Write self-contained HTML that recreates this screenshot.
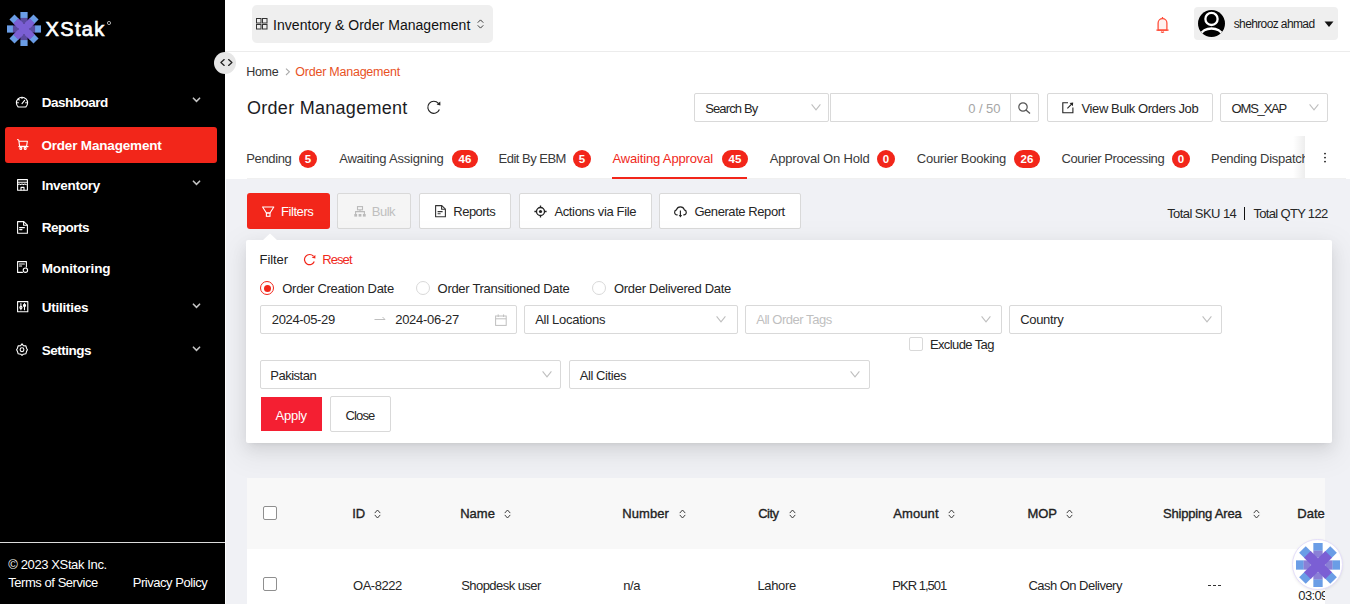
<!DOCTYPE html>
<html><head><meta charset="utf-8"><style>
html,body{margin:0;padding:0;}
body{width:1350px;height:604px;overflow:hidden;position:relative;background:#fff;font-family:'Liberation Sans', sans-serif;}
.t{position:absolute;white-space:nowrap;line-height:1;}
svg{overflow:visible}
</style></head><body>
<div style="position:absolute;left:226px;top:179px;width:1124px;height:425px;background:#f0f1f5;"></div>
<div style="position:absolute;left:0px;top:0px;width:225px;height:604px;background:#000;"></div>
<div style="position:absolute;left:225px;top:51px;width:1125px;height:1px;background:#ececec;"></div>
<svg style="position:absolute;left:7px;top:12px;" width="34" height="34" viewBox="-17 -17 34 34"><rect x="-3.6" y="-17" width="7.2" height="6" fill="#6a9de6" transform="rotate(0)"/><rect x="-3.6" y="-17" width="7.2" height="6" fill="#6a9de6" transform="rotate(45)"/><rect x="-3.6" y="-17" width="7.2" height="6" fill="#6a9de6" transform="rotate(90)"/><rect x="-3.6" y="-17" width="7.2" height="6" fill="#6a9de6" transform="rotate(135)"/><rect x="-3.6" y="-17" width="7.2" height="6" fill="#6a9de6" transform="rotate(180)"/><rect x="-3.6" y="-17" width="7.2" height="6" fill="#6a9de6" transform="rotate(225)"/><rect x="-3.6" y="-17" width="7.2" height="6" fill="#6a9de6" transform="rotate(270)"/><rect x="-3.6" y="-17" width="7.2" height="6" fill="#6a9de6" transform="rotate(315)"/><rect x="-3.6" y="-11.1" width="7.2" height="5.5" fill="#5a4a9f" transform="rotate(0)"/><rect x="-3.6" y="-11.1" width="7.2" height="5.5" fill="#5a4a9f" transform="rotate(90)"/><rect x="-3.6" y="-11.1" width="7.2" height="5.5" fill="#5a4a9f" transform="rotate(180)"/><rect x="-3.6" y="-11.1" width="7.2" height="5.5" fill="#5a4a9f" transform="rotate(270)"/><rect x="-3.7" y="-11.6" width="7.4" height="23.2" fill="#7b5fd4" transform="rotate(45)"/><rect x="-3.7" y="-11.6" width="7.4" height="23.2" fill="#7b5fd4" transform="rotate(-45)"/></svg>
<span class="t" style="left:45.60px;top:18.70px;font-size:20px;color:#ffffff;letter-spacing:1.335px;-webkit-text-stroke:0.7px #fff;">XStak</span>
<svg style="position:absolute;left:106px;top:20px;" width="6" height="6" viewBox="0 0 6 6"><circle cx="3" cy="3" r="1.6" fill="none" stroke="#bbb" stroke-width="0.9"/></svg>
<div style="position:absolute;left:5px;top:127px;width:212px;height:35.5px;background:#f2261a;border-radius:3px;"></div>
<span class="t" style="left:41.70px;top:95.53px;font-size:13.5px;color:#ffffff;font-weight:bold;letter-spacing:-0.496px;">Dashboard</span>
<span class="t" style="left:41.40px;top:139.12px;font-size:13.5px;color:#ffffff;font-weight:bold;letter-spacing:-0.176px;">Order Management</span>
<span class="t" style="left:41.70px;top:178.53px;font-size:13.5px;color:#ffffff;font-weight:bold;letter-spacing:-0.282px;">Inventory</span>
<span class="t" style="left:41.70px;top:221.03px;font-size:13.5px;color:#ffffff;font-weight:bold;letter-spacing:-0.533px;">Reports</span>
<span class="t" style="left:41.70px;top:261.52px;font-size:13.5px;color:#ffffff;font-weight:bold;letter-spacing:-0.098px;">Monitoring</span>
<span class="t" style="left:41.70px;top:301.12px;font-size:13.5px;color:#ffffff;font-weight:bold;letter-spacing:-0.256px;">Utilities</span>
<span class="t" style="left:41.70px;top:343.82px;font-size:13.5px;color:#ffffff;font-weight:bold;letter-spacing:-0.492px;">Settings</span>
<svg style="position:absolute;left:16px;top:95.5px;" width="12" height="12" viewBox="0 0 12 12"><path d="M2.2,11 A5.6,5.6 0 1 1 9.8,11 Z" fill="none" stroke="#fff" stroke-width="1.1" stroke-linecap="round" stroke-linejoin="round"/><path d="M6,7.6 L8.6,4.4" fill="none" stroke="#fff" stroke-width="1.1" stroke-linecap="round" stroke-linejoin="round"/><path d="M6,1.2 V2.4 M2.4,3.2 L3.2,4 M1.4,6.8 H2.4 M9.6,6.8 H10.6" fill="none" stroke="#fff" stroke-width="1.1" stroke-linecap="round" stroke-linejoin="round"/></svg>
<svg style="position:absolute;left:17px;top:138.8px;" width="12" height="11" viewBox="0 0 12 11"><path d="M0.6,0.6 L1.8,1.2 L2.6,7.2 H9.6 L10.4,2.2 H2" fill="none" stroke="#fff" stroke-width="1.1" stroke-linecap="round" stroke-linejoin="round"/><circle cx="3.8" cy="9.4" r="1" fill="none" stroke="#fff" stroke-width="1.1" stroke-linecap="round" stroke-linejoin="round"/><circle cx="8.2" cy="9.4" r="1" fill="none" stroke="#fff" stroke-width="1.1" stroke-linecap="round" stroke-linejoin="round"/><path d="M1.8,7.6 H11" fill="none" stroke="#fff" stroke-width="1.1" stroke-linecap="round" stroke-linejoin="round"/></svg>
<svg style="position:absolute;left:17px;top:178.6px;" width="11" height="12" viewBox="0 0 11 12"><rect x="0.6" y="0.6" width="9.8" height="10.6" fill="none" stroke="#fff" stroke-width="1.1" stroke-linecap="round" stroke-linejoin="round"/><path d="M0.6,3.2 H10.4" fill="none" stroke="#fff" stroke-width="1.1" stroke-linecap="round" stroke-linejoin="round"/><path d="M0.8,5.6 Q2.2,4.4 3.6,5.6 Q5,4.4 6.4,5.6 Q7.8,4.4 9.2,5.6" fill="none" stroke="#fff" stroke-width="1.1" stroke-linecap="round" stroke-linejoin="round"/><path d="M4,11 V8.4 H7 V11" fill="none" stroke="#fff" stroke-width="1.1" stroke-linecap="round" stroke-linejoin="round"/></svg>
<svg style="position:absolute;left:17px;top:221px;" width="11" height="13" viewBox="0 0 11 13"><path d="M0.6,0.6 H6.8 L10.4,4.2 V12.2 H0.6 Z" fill="none" stroke="#fff" stroke-width="1.1" stroke-linecap="round" stroke-linejoin="round"/><path d="M6.6,0.8 V4.2 H10.2" fill="none" stroke="#fff" stroke-width="1.1" stroke-linecap="round" stroke-linejoin="round"/><path d="M2.6,6.6 H7.4 M2.6,8.6 H5" fill="none" stroke="#fff" stroke-width="1.1" stroke-linecap="round" stroke-linejoin="round"/></svg>
<svg style="position:absolute;left:17px;top:261px;" width="12" height="12" viewBox="0 0 12 12"><path d="M9.4,6 V0.6 H0.6 V11.4 H5.4" fill="none" stroke="#fff" stroke-width="1.1" stroke-linecap="round" stroke-linejoin="round"/><path d="M2.4,3 H7.4 M2.4,5 H4.6" fill="none" stroke="#fff" stroke-width="1.1" stroke-linecap="round" stroke-linejoin="round"/><circle cx="8.4" cy="9.2" r="2.2" fill="none" stroke="#fff" stroke-width="1.1" stroke-linecap="round" stroke-linejoin="round"/></svg>
<svg style="position:absolute;left:16.8px;top:300.8px;" width="11.5" height="11.5" viewBox="0 0 11.5 11.5"><rect x="0.6" y="0.6" width="10.2" height="10.2" fill="none" stroke="#fff" stroke-width="1.1" stroke-linecap="round" stroke-linejoin="round"/><path d="M3.9,2.6 V8.8 M7.5,2.6 V8.8" fill="none" stroke="#fff" stroke-width="1.1" stroke-linecap="round" stroke-linejoin="round"/><circle cx="3.9" cy="6.4" r="1.1" fill="none" stroke="#fff" stroke-width="1.1" stroke-linecap="round" stroke-linejoin="round"/><circle cx="7.5" cy="4.4" r="1.1" fill="none" stroke="#fff" stroke-width="1.1" stroke-linecap="round" stroke-linejoin="round"/></svg>
<svg style="position:absolute;left:16.2px;top:343px;" width="12" height="13" viewBox="0 0 12 13"><path d="M6,0.8 L7.3,2.6 L9.9,2.9 L10.5,5.2 L11.4,6.8 L10.5,8.6 L9.8,10.8 L7.3,11.2 L6,12.4 L4.7,11.2 L2.2,10.8 L1.5,8.6 L0.6,6.8 L1.5,5.2 L2.1,2.9 L4.7,2.6 Z" fill="none" stroke="#fff" stroke-width="1.1" stroke-linecap="round" stroke-linejoin="round"/><circle cx="6" cy="6.7" r="1.9" fill="none" stroke="#fff" stroke-width="1.1" stroke-linecap="round" stroke-linejoin="round"/></svg>
<svg style="position:absolute;left:192px;top:97.2px;" width="9" height="6" viewBox="0 0 9 6"><path d="M1.4,1.2 L4.5,4.4 L7.6,1.2" fill="none" stroke="#c4c4c4" stroke-width="1.6" stroke-linecap="round" stroke-linejoin="miter"/></svg>
<svg style="position:absolute;left:192px;top:180.2px;" width="9" height="6" viewBox="0 0 9 6"><path d="M1.4,1.2 L4.5,4.4 L7.6,1.2" fill="none" stroke="#c4c4c4" stroke-width="1.6" stroke-linecap="round" stroke-linejoin="miter"/></svg>
<svg style="position:absolute;left:192px;top:303.2px;" width="9" height="6" viewBox="0 0 9 6"><path d="M1.4,1.2 L4.5,4.4 L7.6,1.2" fill="none" stroke="#c4c4c4" stroke-width="1.6" stroke-linecap="round" stroke-linejoin="miter"/></svg>
<svg style="position:absolute;left:192px;top:346.2px;" width="9" height="6" viewBox="0 0 9 6"><path d="M1.4,1.2 L4.5,4.4 L7.6,1.2" fill="none" stroke="#c4c4c4" stroke-width="1.6" stroke-linecap="round" stroke-linejoin="miter"/></svg>
<div style="position:absolute;left:214px;top:51.5px;width:22px;height:22px;background:#e6e6e6;border-radius:50%;"></div>
<svg style="position:absolute;left:219.5px;top:58.5px;" width="13" height="8" viewBox="0 0 13 8"><path d="M4.2,0.6 L0.9,3.5 L4.2,6.4 M8.6,0.6 L11.9,3.5 L8.6,6.4" fill="none" stroke="#222" stroke-width="1.3" stroke-linecap="round" stroke-linejoin="round"/></svg>
<div style="position:absolute;left:0px;top:542px;width:225px;height:1px;background:#dcdcdc;"></div>
<span class="t" style="left:8.30px;top:558.35px;font-size:13px;color:#ffffff;letter-spacing:-0.385px;">© 2023 XStak Inc.</span>
<span class="t" style="left:8.30px;top:576.35px;font-size:13px;color:#ffffff;letter-spacing:-0.458px;">Terms of Service</span>
<span class="t" style="left:132.70px;top:576.35px;font-size:13px;color:#ffffff;letter-spacing:-0.447px;">Privacy Policy</span>
<div style="position:absolute;left:252px;top:5px;width:241px;height:38px;background:#efefef;border-radius:5px;"></div>
<svg style="position:absolute;left:256px;top:18px;" width="12" height="12" viewBox="0 0 12 12"><rect x="0.5" y="0.5" width="4.5" height="4.5" fill="none" stroke="#333" stroke-width="1"/><rect x="6.5" y="0.5" width="4.5" height="4.5" fill="none" stroke="#333" stroke-width="1"/><rect x="0.5" y="6.5" width="4.5" height="4.5" fill="none" stroke="#333" stroke-width="1"/><rect x="6.5" y="6.5" width="4.5" height="4.5" fill="none" stroke="#333" stroke-width="1"/></svg>
<span class="t" style="left:273.00px;top:17.90px;font-size:14px;color:#111111;letter-spacing:0.044px;">Inventory &amp; Order Management</span>
<svg style="position:absolute;left:476.5px;top:18.8px;" width="7" height="10" viewBox="0 0 7 10"><path d="M1,3.4 L3.5,0.9 L6,3.4 M1,6.6 L3.5,9.1 L6,6.6" fill="none" stroke="#333" stroke-width="0.95" stroke-linecap="round" stroke-linejoin="miter"/></svg>
<svg style="position:absolute;left:1155.5px;top:15.5px;" width="13" height="17" viewBox="0 0 13 17"><path d="M2.1,14 V7 A4.4,4.4 0 0 1 10.9,7 V14 Z" fill="#fff1ef" stroke="#ff4a36" stroke-width="1.25"/><path d="M0.4,14 H12.6 M6.5,0.9 V2.6 M5,15.8 Q6.5,16.9 8,15.8" fill="none" stroke="#ff4a36" stroke-width="1.25"/></svg>
<div style="position:absolute;left:1194px;top:7px;width:144px;height:33px;background:#efefef;border-radius:4px;"></div>
<svg style="position:absolute;left:1198px;top:9.6px;" width="27" height="27" viewBox="0 0 27 27"><defs><clipPath id="av"><circle cx="13.5" cy="13.5" r="13.5"/></clipPath></defs><circle cx="13.5" cy="13.5" r="13.5" fill="#000"/><g clip-path="url(#av)"><circle cx="13.5" cy="8.9" r="6.1" fill="none" stroke="#fff" stroke-width="2.3"/><path d="M2.5,25 A11.2,8 0 0 1 24.5,25" fill="none" stroke="#fff" stroke-width="2.3"/></g></svg>
<span class="t" style="left:1233.70px;top:17.90px;font-size:12px;color:#1a1a1a;letter-spacing:-0.617px;">shehrooz ahmad</span>
<svg style="position:absolute;left:1323.5px;top:21.3px;" width="10" height="6.5" viewBox="0 0 10 6.5"><path d="M0.5,0.5 H9.5 L5,6 Z" fill="#111"/></svg>
<span class="t" style="left:246.30px;top:66.28px;font-size:12.5px;color:#333333;letter-spacing:-0.331px;">Home</span>
<svg style="position:absolute;left:284.5px;top:68px;" width="6" height="8" viewBox="0 0 6 8"><path d="M1,0.6 L4.4,3.8 L1,7" fill="none" stroke="#aaa" stroke-width="1.1"/></svg>
<span class="t" style="left:295.30px;top:66.28px;font-size:12.5px;color:#e8521f;letter-spacing:-0.234px;">Order Management</span>
<span class="t" style="left:247.00px;top:98.70px;font-size:18px;color:#1c1c24;letter-spacing:0.282px;">Order Management</span>
<svg style="position:absolute;left:426.5px;top:100px;" width="14" height="14" viewBox="0 0 14 14"><path d="M11.4,3.4 A6,6 0 1 0 12.4,9.5" fill="none" stroke="#222" stroke-width="1.15"/><path d="M9.6,4.6 L13.3,1.4 L13.4,5.4 Z" fill="#222"/></svg>
<div style="position:absolute;left:694px;top:93px;width:135px;height:29px;box-sizing:border-box;border:1px solid #d9d9d9;border-radius:2px;background:#fff;"></div>
<span class="t" style="left:705.20px;top:102.05px;font-size:13px;color:#262626;letter-spacing:-0.872px;">Search By</span>
<svg style="position:absolute;left:810.5px;top:103.5px;" width="10" height="7" viewBox="0 0 10 7"><path d="M0.6,0.4 L5,5.8 L9.4,0.4" fill="none" stroke="#bfbfbf" stroke-width="1.1"/></svg>
<div style="position:absolute;left:830px;top:93px;width:209px;height:29px;box-sizing:border-box;border:1px solid #d9d9d9;border-radius:0 2px 2px 0;background:#fff;"></div>
<div style="position:absolute;left:1010px;top:93px;width:1px;height:29px;background:#d9d9d9;"></div>
<span class="t" style="left:968.30px;top:101.95px;font-size:13px;color:#a6a6a6;letter-spacing:-0.079px;">0 / 50</span>
<svg style="position:absolute;left:1017.5px;top:102px;" width="13" height="12" viewBox="0 0 13 12"><circle cx="5" cy="5" r="4.2" fill="none" stroke="#555" stroke-width="1.2"/><path d="M8,8 L12,11.6" stroke="#555" stroke-width="1.3"/></svg>
<div style="position:absolute;left:1047px;top:93px;width:166px;height:29px;box-sizing:border-box;border:1px solid #d9d9d9;border-radius:2px;background:#fff;"></div>
<svg style="position:absolute;left:1061.5px;top:101.5px;" width="12" height="12" viewBox="0 0 12 12"><path d="M6,0.8 H0.8 V10.8 H10.9 V5.6" fill="none" stroke="#222" stroke-width="1.1"/><path d="M5.4,6.3 L9.8,1.9" fill="none" stroke="#222" stroke-width="1.1"/><path d="M7.6,1 L11.2,0.6 L10.8,4.2 Z" fill="#222"/></svg>
<span class="t" style="left:1081.60px;top:101.85px;font-size:13px;color:#262626;letter-spacing:-0.407px;">View Bulk Orders Job</span>
<div style="position:absolute;left:1220px;top:93px;width:108px;height:29px;box-sizing:border-box;border:1px solid #d9d9d9;border-radius:2px;background:#fff;"></div>
<span class="t" style="left:1231.60px;top:101.85px;font-size:13px;color:#262626;letter-spacing:-1.200px;">OMS_XAP</span>
<svg style="position:absolute;left:1308.5px;top:103.5px;" width="10" height="7" viewBox="0 0 10 7"><path d="M0.6,0.4 L5,5.8 L9.4,0.4" fill="none" stroke="#bfbfbf" stroke-width="1.1"/></svg>
<div style="position:absolute;left:247px;top:178px;width:1099px;height:1px;background:#f0f0f0;"></div>
<span class="t" style="left:246.30px;top:152.45px;font-size:13px;color:#3a3a3a;letter-spacing:-0.363px;">Pending</span>
<div style="position:absolute;left:298.8px;top:149.8px;width:18.30000000000001px;height:18px;border-radius:9px;background:#f2261a;color:#fff;font-size:11.5px;font-weight:bold;line-height:18px;text-align:center;">5</div>
<span class="t" style="left:339.20px;top:152.45px;font-size:13px;color:#3a3a3a;letter-spacing:-0.215px;">Awaiting Assigning</span>
<div style="position:absolute;left:452px;top:149.8px;width:26px;height:18px;border-radius:9px;background:#f2261a;color:#fff;font-size:11.5px;font-weight:bold;line-height:18px;text-align:center;">46</div>
<span class="t" style="left:498.60px;top:152.45px;font-size:13px;color:#3a3a3a;letter-spacing:-0.514px;">Edit By EBM</span>
<div style="position:absolute;left:573px;top:149.8px;width:18px;height:18px;border-radius:9px;background:#f2261a;color:#fff;font-size:11.5px;font-weight:bold;line-height:18px;text-align:center;">5</div>
<span class="t" style="left:612.40px;top:152.45px;font-size:13px;color:#f0291c;letter-spacing:-0.146px;">Awaiting Approval</span>
<div style="position:absolute;left:722px;top:149.8px;width:26px;height:18px;border-radius:9px;background:#f2261a;color:#fff;font-size:11.5px;font-weight:bold;line-height:18px;text-align:center;">45</div>
<span class="t" style="left:769.70px;top:152.45px;font-size:13px;color:#3a3a3a;letter-spacing:-0.165px;">Approval On Hold</span>
<div style="position:absolute;left:877px;top:149.8px;width:18px;height:18px;border-radius:9px;background:#f2261a;color:#fff;font-size:11.5px;font-weight:bold;line-height:18px;text-align:center;">0</div>
<span class="t" style="left:916.80px;top:152.45px;font-size:13px;color:#3a3a3a;letter-spacing:-0.270px;">Courier Booking</span>
<div style="position:absolute;left:1014px;top:149.8px;width:26px;height:18px;border-radius:9px;background:#f2261a;color:#fff;font-size:11.5px;font-weight:bold;line-height:18px;text-align:center;">26</div>
<span class="t" style="left:1061.60px;top:152.45px;font-size:13px;color:#3a3a3a;letter-spacing:-0.442px;">Courier Processing</span>
<div style="position:absolute;left:1171.8px;top:149.8px;width:18.200000000000045px;height:18px;border-radius:9px;background:#f2261a;color:#fff;font-size:11.5px;font-weight:bold;line-height:18px;text-align:center;">0</div>
<span class="t" style="left:1211.00px;top:152.45px;font-size:13px;color:#3a3a3a;letter-spacing:-0.278px;">Pending Dispatch</span>
<div style="position:absolute;left:612px;top:177px;width:135px;height:2px;background:#f2261a;"></div>
<div style="position:absolute;left:1293px;top:136px;width:12px;height:42px;background:linear-gradient(to right,rgba(0,0,0,0),rgba(0,0,0,0.07));"></div>
<div style="position:absolute;left:1305px;top:136px;width:41px;height:42px;background:#fff;"></div>
<svg style="position:absolute;left:1323px;top:152px;" width="4" height="12" viewBox="0 0 4 12"><circle cx="2" cy="1.6" r="0.95" fill="#222"/><circle cx="2" cy="5.6" r="0.95" fill="#222"/><circle cx="2" cy="9.6" r="0.95" fill="#222"/></svg>
<div style="position:absolute;left:247px;top:193px;width:83px;height:36px;background:#f2261a;border-radius:3px;"></div>
<svg style="position:absolute;left:262px;top:205.5px;" width="13" height="11" viewBox="0 0 13 11"><path d="M0.6,1 H11.8 L8,7 H4.4 Z" fill="none" stroke="#fff" stroke-width="1.1" stroke-linejoin="round"/><rect x="4.4" y="7" width="3.6" height="3.3" fill="none" stroke="#fff" stroke-width="1.1"/></svg>
<span class="t" style="left:281.00px;top:205.45px;font-size:13px;color:#fff;letter-spacing:-0.431px;">Filters</span>
<div style="position:absolute;left:337px;top:193px;width:74px;height:36px;box-sizing:border-box;background:#f5f5f5;border:1px solid #d9d9d9;border-radius:2px;"></div>
<svg style="position:absolute;left:353.5px;top:205.5px;" width="12" height="11" viewBox="0 0 12 11"><rect x="3.5" y="0.6" width="5" height="3.2" fill="none" stroke="#bbb" stroke-width="1.1"/><path d="M6,3.8 V5.6 M1.6,8 V5.6 H10.4 V8" fill="none" stroke="#bbb" stroke-width="1.1"/><rect x="0.3" y="8" width="2.8" height="2.6" fill="#bbb"/><rect x="4.6" y="8" width="2.8" height="2.6" fill="#bbb"/><rect x="8.9" y="8" width="2.8" height="2.6" fill="#bbb"/></svg>
<span class="t" style="left:371.80px;top:205.45px;font-size:13px;color:#bfbfbf;letter-spacing:-0.530px;">Bulk</span>
<div style="position:absolute;left:419px;top:193px;width:92px;height:36px;box-sizing:border-box;background:#fff;border:1px solid #d9d9d9;border-radius:2px;"></div>
<div style="position:absolute;left:519px;top:193px;width:133px;height:36px;box-sizing:border-box;background:#fff;border:1px solid #d9d9d9;border-radius:2px;"></div>
<div style="position:absolute;left:659px;top:193px;width:142px;height:36px;box-sizing:border-box;background:#fff;border:1px solid #d9d9d9;border-radius:2px;"></div>
<svg style="position:absolute;left:435px;top:205px;" width="11" height="12.5" viewBox="0 0 11 12.5"><path d="M0.6,0.6 H6.8 L10.4,4.2 V11.8 H0.6 Z" fill="none" stroke="#333" stroke-width="1.1" stroke-linejoin="round"/><path d="M6.6,0.8 V4.2 H10.2 M2.6,6.6 H7.6 M2.6,8.8 H5.6" fill="none" stroke="#333" stroke-width="1.1"/></svg>
<span class="t" style="left:453.30px;top:205.45px;font-size:13px;color:#262626;letter-spacing:-0.520px;">Reports</span>
<svg style="position:absolute;left:534px;top:204.5px;" width="13" height="13" viewBox="0 0 13 13"><circle cx="6.5" cy="6.5" r="4" fill="none" stroke="#222" stroke-width="1.3"/><circle cx="6.5" cy="6.5" r="1.6" fill="#222"/><path d="M6.5,0.4 V2.5 M6.5,10.5 V12.6 M0.4,6.5 H2.5 M10.5,6.5 H12.6" stroke="#222" stroke-width="1.3"/></svg>
<span class="t" style="left:554.40px;top:205.45px;font-size:13px;color:#262626;letter-spacing:-0.359px;">Actions via File</span>
<svg style="position:absolute;left:674px;top:206px;" width="13" height="12" viewBox="0 0 13 12"><path d="M3.6,8.8 H3 C1.6,8.8 0.6,7.6 0.6,6.2 C0.6,5 1.4,4.2 2.4,3.9 C3,2 4.6,0.9 6.4,0.9 C8.2,0.9 9.8,2 10.4,3.9 C11.5,4.2 12.3,5.1 12.3,6.3 C12.3,7.7 11.3,8.8 9.9,8.8 H9.3" fill="none" stroke="#222" stroke-width="1.15"/><path d="M6.4,4.4 V9.8" stroke="#222" stroke-width="1.15"/><path d="M4.7,9 L6.4,11.4 L8.1,9 Z" fill="#222"/></svg>
<span class="t" style="left:694.40px;top:205.45px;font-size:13px;color:#262626;letter-spacing:-0.430px;">Generate Report</span>
<span class="t" style="left:1167.20px;top:206.75px;font-size:13px;color:#262626;letter-spacing:-0.568px;">Total SKU 14</span>
<div style="position:absolute;left:1244px;top:206.5px;width:1.3px;height:13px;background:#111;"></div>
<span class="t" style="left:1253.50px;top:206.75px;font-size:13px;color:#262626;letter-spacing:-0.681px;">Total QTY 122</span>
<div style="position:absolute;left:246px;top:240px;width:1086px;height:203px;background:#fff;border-radius:2px;box-shadow:0 6px 16px 0 rgba(0,0,0,0.08),0 3px 6px -4px rgba(0,0,0,0.12),0 9px 28px 8px rgba(0,0,0,0.05);"></div>
<svg style="position:absolute;left:262px;top:232.5px;" width="16" height="8" viewBox="0 0 16 8"><path d="M0,8 L8,0.5 L16,8 Z" fill="#fff"/></svg>
<span class="t" style="left:259.60px;top:252.95px;font-size:13px;color:#222222;letter-spacing:-0.092px;">Filter</span>
<svg style="position:absolute;left:302.5px;top:253px;" width="13" height="13" viewBox="0 0 13 13"><path d="M10.4,3.2 A5.1,5.1 0 1 0 11.3,8.6" fill="none" stroke="#f2261a" stroke-width="1.2"/><path d="M8.8,4.8 L12.4,1.9 L12.4,5.4 Z" fill="#f2261a"/></svg>
<span class="t" style="left:322.20px;top:252.95px;font-size:13px;color:#f0291c;letter-spacing:-0.912px;">Reset</span>
<div style="position:absolute;left:260px;top:281px;width:14px;height:14px;box-sizing:border-box;border:1px solid #f2261a;border-radius:50%;background:#fff;"></div>
<div style="position:absolute;left:263.5px;top:284.5px;width:7px;height:7px;background:#f2261a;border-radius:50%;"></div>
<span class="t" style="left:282.30px;top:281.85px;font-size:13px;color:#262626;letter-spacing:-0.290px;">Order Creation Date</span>
<div style="position:absolute;left:416px;top:281px;width:14px;height:14px;box-sizing:border-box;border:1px solid #d9d9d9;border-radius:50%;background:#fff;"></div>
<span class="t" style="left:437.60px;top:281.85px;font-size:13px;color:#262626;letter-spacing:-0.297px;">Order Transitioned Date</span>
<div style="position:absolute;left:592px;top:281px;width:14px;height:14px;box-sizing:border-box;border:1px solid #d9d9d9;border-radius:50%;background:#fff;"></div>
<span class="t" style="left:613.90px;top:281.85px;font-size:13px;color:#262626;letter-spacing:-0.284px;">Order Delivered Date</span>
<div style="position:absolute;left:260px;top:305px;width:257px;height:29px;box-sizing:border-box;border:1px solid #d9d9d9;border-radius:2px;"></div>
<span class="t" style="left:271.80px;top:312.85px;font-size:13px;color:#262626;letter-spacing:-0.341px;">2024-05-29</span>
<svg style="position:absolute;left:374px;top:315px;" width="12" height="6" viewBox="0 0 12 6"><path d="M0.5,4.5 H11 L8.5,2" fill="none" stroke="#bfbfbf" stroke-width="1"/></svg>
<span class="t" style="left:395.20px;top:312.85px;font-size:13px;color:#262626;letter-spacing:-0.263px;">2024-06-27</span>
<svg style="position:absolute;left:494.5px;top:313.5px;" width="12" height="12" viewBox="0 0 12 12"><rect x="0.6" y="2" width="10.6" height="9.4" fill="none" stroke="#bfbfbf" stroke-width="1"/><path d="M0.6,4.8 H11.2 M3.2,0.4 V3 M8.6,0.4 V3" fill="none" stroke="#bfbfbf" stroke-width="1"/></svg>
<div style="position:absolute;left:524px;top:305px;width:214px;height:29px;box-sizing:border-box;border:1px solid #d9d9d9;border-radius:2px;background:#fff;"></div>
<span class="t" style="left:535.20px;top:313.45px;font-size:13px;color:#262626;letter-spacing:-0.284px;">All Locations</span>
<svg style="position:absolute;left:716px;top:316px;" width="10" height="7" viewBox="0 0 10 7"><path d="M0.6,0.4 L5,5.8 L9.4,0.4" fill="none" stroke="#bfbfbf" stroke-width="1.1"/></svg>
<div style="position:absolute;left:745px;top:305px;width:257px;height:29px;box-sizing:border-box;border:1px solid #d9d9d9;border-radius:2px;background:#fff;"></div>
<span class="t" style="left:756.20px;top:313.45px;font-size:13px;color:#bfbfbf;letter-spacing:-0.474px;">All Order Tags</span>
<svg style="position:absolute;left:980.5px;top:316px;" width="10" height="7" viewBox="0 0 10 7"><path d="M0.6,0.4 L5,5.8 L9.4,0.4" fill="none" stroke="#bfbfbf" stroke-width="1.1"/></svg>
<div style="position:absolute;left:1009px;top:305px;width:213px;height:29px;box-sizing:border-box;border:1px solid #d9d9d9;border-radius:2px;background:#fff;"></div>
<span class="t" style="left:1020.20px;top:313.45px;font-size:13px;color:#262626;letter-spacing:-0.337px;">Country</span>
<svg style="position:absolute;left:1202.4px;top:316px;" width="10" height="7" viewBox="0 0 10 7"><path d="M0.6,0.4 L5,5.8 L9.4,0.4" fill="none" stroke="#bfbfbf" stroke-width="1.1"/></svg>
<div style="position:absolute;left:909px;top:337px;width:14px;height:14px;box-sizing:border-box;border:1px solid #d9d9d9;border-radius:2px;background:#fff;"></div>
<span class="t" style="left:929.90px;top:338.25px;font-size:13px;color:#262626;letter-spacing:-0.609px;">Exclude Tag</span>
<div style="position:absolute;left:260px;top:360px;width:301px;height:29px;box-sizing:border-box;border:1px solid #d9d9d9;border-radius:2px;background:#fff;"></div>
<span class="t" style="left:270.30px;top:369.05px;font-size:13px;color:#262626;letter-spacing:-0.504px;">Pakistan</span>
<svg style="position:absolute;left:541.5px;top:371px;" width="10" height="7" viewBox="0 0 10 7"><path d="M0.6,0.4 L5,5.8 L9.4,0.4" fill="none" stroke="#bfbfbf" stroke-width="1.1"/></svg>
<div style="position:absolute;left:569px;top:360px;width:301px;height:29px;box-sizing:border-box;border:1px solid #d9d9d9;border-radius:2px;background:#fff;"></div>
<span class="t" style="left:579.70px;top:369.05px;font-size:13px;color:#262626;letter-spacing:-0.418px;">All Cities</span>
<svg style="position:absolute;left:849.5px;top:371px;" width="10" height="7" viewBox="0 0 10 7"><path d="M0.6,0.4 L5,5.8 L9.4,0.4" fill="none" stroke="#bfbfbf" stroke-width="1.1"/></svg>
<div style="position:absolute;left:261px;top:397px;width:61px;height:34px;background:#f41f32;"></div>
<span class="t" style="left:275.60px;top:408.55px;font-size:13px;color:#fff;letter-spacing:-0.255px;">Apply</span>
<div style="position:absolute;left:330px;top:396px;width:61px;height:36px;box-sizing:border-box;border:1px solid #d9d9d9;border-radius:2px;background:#fff;"></div>
<span class="t" style="left:345.50px;top:408.55px;font-size:13px;color:#262626;letter-spacing:-0.852px;">Close</span>
<div style="position:absolute;left:247px;top:478px;width:1078px;height:71px;background:#f8f8f8;"></div>
<div style="position:absolute;left:247px;top:549px;width:1078px;height:55px;background:#fff;"></div>
<div style="position:absolute;left:263px;top:506px;width:14px;height:14px;box-sizing:border-box;border:1.6px solid #8f8f8f;border-radius:2px;background:#fff;"></div>
<div style="position:absolute;left:263px;top:577px;width:14px;height:14px;box-sizing:border-box;border:1.6px solid #8f8f8f;border-radius:2px;background:#fff;"></div>
<span class="t" style="left:352.20px;top:507.35px;font-size:13px;color:#222222;-webkit-text-stroke:0.35px #222;">ID</span>
<svg style="position:absolute;left:374.2px;top:508.8px;" width="7" height="10" viewBox="0 0 7 10"><path d="M1,3.8 L3.5,1 L6,3.8 M1,6.2 L3.5,9 L6,6.2" fill="none" stroke="#333" stroke-width="0.95" stroke-linecap="round" stroke-linejoin="miter"/></svg>
<span class="t" style="left:460.20px;top:507.35px;font-size:13px;color:#222222;letter-spacing:0.018px;-webkit-text-stroke:0.35px #222;">Name</span>
<svg style="position:absolute;left:503.6px;top:508.8px;" width="7" height="10" viewBox="0 0 7 10"><path d="M1,3.8 L3.5,1 L6,3.8 M1,6.2 L3.5,9 L6,6.2" fill="none" stroke="#333" stroke-width="0.95" stroke-linecap="round" stroke-linejoin="miter"/></svg>
<span class="t" style="left:622.30px;top:507.35px;font-size:13px;color:#222222;letter-spacing:0.079px;-webkit-text-stroke:0.35px #222;">Number</span>
<svg style="position:absolute;left:678.9px;top:508.8px;" width="7" height="10" viewBox="0 0 7 10"><path d="M1,3.8 L3.5,1 L6,3.8 M1,6.2 L3.5,9 L6,6.2" fill="none" stroke="#333" stroke-width="0.95" stroke-linecap="round" stroke-linejoin="miter"/></svg>
<span class="t" style="left:758.20px;top:507.35px;font-size:13px;color:#222222;letter-spacing:-0.496px;-webkit-text-stroke:0.35px #222;">City</span>
<svg style="position:absolute;left:788.9px;top:508.8px;" width="7" height="10" viewBox="0 0 7 10"><path d="M1,3.8 L3.5,1 L6,3.8 M1,6.2 L3.5,9 L6,6.2" fill="none" stroke="#333" stroke-width="0.95" stroke-linecap="round" stroke-linejoin="miter"/></svg>
<span class="t" style="left:893.30px;top:507.35px;font-size:13px;color:#222222;letter-spacing:0.082px;-webkit-text-stroke:0.35px #222;">Amount</span>
<svg style="position:absolute;left:947.8px;top:508.8px;" width="7" height="10" viewBox="0 0 7 10"><path d="M1,3.8 L3.5,1 L6,3.8 M1,6.2 L3.5,9 L6,6.2" fill="none" stroke="#333" stroke-width="0.95" stroke-linecap="round" stroke-linejoin="miter"/></svg>
<span class="t" style="left:1027.40px;top:507.35px;font-size:13px;color:#222222;letter-spacing:-0.070px;-webkit-text-stroke:0.35px #222;">MOP</span>
<svg style="position:absolute;left:1065.6px;top:508.8px;" width="7" height="10" viewBox="0 0 7 10"><path d="M1,3.8 L3.5,1 L6,3.8 M1,6.2 L3.5,9 L6,6.2" fill="none" stroke="#333" stroke-width="0.95" stroke-linecap="round" stroke-linejoin="miter"/></svg>
<span class="t" style="left:1162.90px;top:507.35px;font-size:13px;color:#222222;letter-spacing:-0.178px;-webkit-text-stroke:0.35px #222;">Shipping Area</span>
<svg style="position:absolute;left:1252.6px;top:508.8px;" width="7" height="10" viewBox="0 0 7 10"><path d="M1,3.8 L3.5,1 L6,3.8 M1,6.2 L3.5,9 L6,6.2" fill="none" stroke="#333" stroke-width="0.95" stroke-linecap="round" stroke-linejoin="miter"/></svg>
<span class="t" style="left:1297.30px;top:507.35px;font-size:13px;color:#222222;-webkit-text-stroke:0.35px #222;">Date</span>
<span class="t" style="left:353.00px;top:578.75px;font-size:13px;color:#262626;letter-spacing:-0.467px;">OA-8222</span>
<span class="t" style="left:461.20px;top:578.75px;font-size:13px;color:#262626;letter-spacing:-0.549px;">Shopdesk user</span>
<span class="t" style="left:623.30px;top:578.75px;font-size:13px;color:#262626;letter-spacing:-0.471px;">n/a</span>
<span class="t" style="left:757.50px;top:578.75px;font-size:13px;color:#262626;letter-spacing:-0.370px;">Lahore</span>
<span class="t" style="left:892.30px;top:578.75px;font-size:13px;color:#262626;letter-spacing:-0.980px;">PKR 1,501</span>
<span class="t" style="left:1028.40px;top:578.75px;font-size:13px;color:#262626;letter-spacing:-0.524px;">Cash On Delivery</span>
<div style="position:absolute;left:1207.5px;top:585px;width:3.4px;height:1.1px;background:#333;"></div>
<div style="position:absolute;left:1212.6px;top:585px;width:3.4px;height:1.1px;background:#333;"></div>
<div style="position:absolute;left:1217.6px;top:585px;width:3.4px;height:1.1px;background:#333;"></div>
<span class="t" style="left:1298.30px;top:588.95px;font-size:13px;color:#262626;letter-spacing:-0.650px;">03:09</span>
<div style="position:absolute;left:1325px;top:478px;width:25px;height:126px;background:#f0f1f5;"></div>
<div style="position:absolute;left:1292px;top:539px;width:51px;height:51px;box-sizing:border-box;background:#fff;border-radius:50%;border:1px solid #e4defa;box-shadow:0 1px 3px rgba(0,0,0,0.08);"></div>
<svg style="position:absolute;left:1295.5px;top:542.5px;" width="44" height="44" viewBox="-17 -17 34 34"><rect x="-3.6" y="-17" width="7.2" height="6" fill="#6a9de6" transform="rotate(0)"/><rect x="-3.6" y="-17" width="7.2" height="6" fill="#6a9de6" transform="rotate(45)"/><rect x="-3.6" y="-17" width="7.2" height="6" fill="#6a9de6" transform="rotate(90)"/><rect x="-3.6" y="-17" width="7.2" height="6" fill="#6a9de6" transform="rotate(135)"/><rect x="-3.6" y="-17" width="7.2" height="6" fill="#6a9de6" transform="rotate(180)"/><rect x="-3.6" y="-17" width="7.2" height="6" fill="#6a9de6" transform="rotate(225)"/><rect x="-3.6" y="-17" width="7.2" height="6" fill="#6a9de6" transform="rotate(270)"/><rect x="-3.6" y="-17" width="7.2" height="6" fill="#6a9de6" transform="rotate(315)"/><rect x="-3.6" y="-11.1" width="7.2" height="5.5" fill="#8a80d6" transform="rotate(0)"/><rect x="-3.6" y="-11.1" width="7.2" height="5.5" fill="#8a80d6" transform="rotate(90)"/><rect x="-3.6" y="-11.1" width="7.2" height="5.5" fill="#8a80d6" transform="rotate(180)"/><rect x="-3.6" y="-11.1" width="7.2" height="5.5" fill="#8a80d6" transform="rotate(270)"/><rect x="-3.7" y="-11.6" width="7.4" height="23.2" fill="#7b5fd4" transform="rotate(45)"/><rect x="-3.7" y="-11.6" width="7.4" height="23.2" fill="#7b5fd4" transform="rotate(-45)"/></svg>
</body></html>
